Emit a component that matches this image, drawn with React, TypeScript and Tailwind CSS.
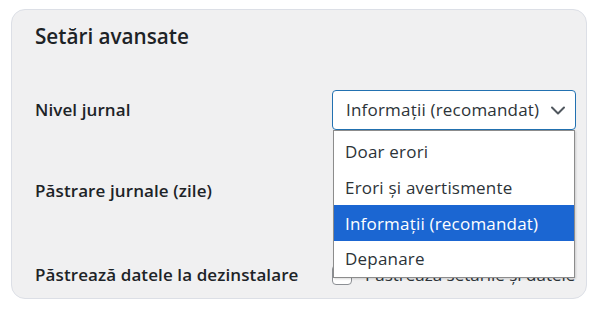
import React from 'react';

const options = ['Doar erori', 'Erori și avertismente', 'Informații (recomandat)', 'Depanare'];

const App: React.FC = () => {
  const selected = 'Informații (recomandat)';
  return (
    <div className="w-[610px] h-[315px] bg-white pt-[9px] pl-[11px] font-['Open_Sans','Noto_Sans',sans-serif] text-[#1d2327]">
      <div className="w-[576px] h-[290px] rounded-[14px] border border-[#dcdfe6] bg-[#f0f0f1] pl-[23px] pt-[12px]">
        <h2 className="text-[20.7px] leading-[28px] font-semibold">Setări avansate</h2>

        <div className="mt-[40px] flex items-center h-[40px]">
          <div className="w-[297px] text-[17px] font-semibold tracking-[0.1px]">Nivel jurnal</div>
          <div className="relative">
            <div className="w-[244px] h-[40px] rounded-[4px] border border-[#2271b1] bg-white flex items-center pl-[13px] pr-[9px] justify-between">
              <span className="text-[17px] text-[#2c3338] tracking-[0.2px]">{selected}</span>
              <svg width="16" height="16" viewBox="0 0 16 16" fill="none">
                <path d="M2 5.5l6 6 6-6" stroke="#50575e" strokeWidth="2" strokeLinecap="round" strokeLinejoin="round" />
              </svg>
            </div>
            {/* open list */}
            <div className="absolute left-[1px] top-[40px] z-10 w-[242px] border border-[#8c8c8c] bg-white pt-[3px] shadow-[1px_1px_2px_rgba(0,0,0,0.15)]">
              {options.map((o) => (
                <div
                  key={o}
                  className={
                    o === selected
                      ? 'h-[36px] flex items-center pl-[11px] text-[17px] tracking-[0.2px] bg-[#1b66d2] text-white'
                      : 'h-[35.7px] flex items-center pl-[11px] text-[17px] tracking-[0.2px] text-[#2c3338]'
                  }
                >
                  {o}
                </div>
              ))}
            </div>
          </div>
        </div>

        <div className="mt-[41px] flex items-center h-[40px]">
          <div className="w-[298px] text-[17px] font-semibold tracking-[0.1px]">Păstrare jurnale (zile)</div>
          <div className="w-[90px] h-[34px] rounded-[4px] border border-[#8c8f94] bg-white pl-[10px] flex items-center text-[17px]">30</div>
        </div>

        <div className="mt-[54px] flex items-center h-[20px]">
          <div className="w-[297px] text-[17px] font-semibold tracking-[0.1px]">Păstrează datele la dezinstalare</div>
          <div className="flex items-center gap-[13px]">
            <div className="w-[20px] h-[20px] rounded-[4px] border border-[#8c8f94] bg-white" />
            <span className="text-[17px] text-[#2c3338]">Păstrează setările și datele</span>
          </div>
        </div>
      </div>
    </div>
  );
};

export default App;
